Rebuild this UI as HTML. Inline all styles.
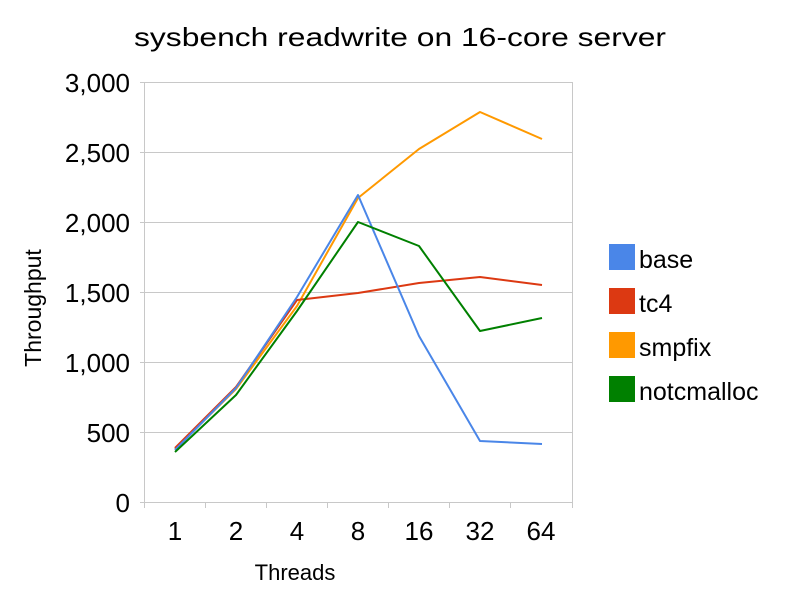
<!DOCTYPE html>
<html><head><meta charset="utf-8"><style>
html,body{margin:0;padding:0;background:#fff;}
svg{display:block;}
text{font-family:"Liberation Sans",sans-serif;fill:#000;}
</style></head><body>
<svg width="800" height="600" viewBox="0 0 800 600" xmlns="http://www.w3.org/2000/svg">
<rect width="800" height="600" fill="#fff"/>
<text x="400" y="46" font-size="26" text-anchor="middle" textLength="532" lengthAdjust="spacingAndGlyphs">sysbench readwrite on 16-core server</text>
<g stroke="#c8c8c8" stroke-width="1" fill="none">
<line x1="140" y1="82.5" x2="572" y2="82.5"/>
<line x1="140" y1="152.5" x2="572" y2="152.5"/>
<line x1="140" y1="222.5" x2="572" y2="222.5"/>
<line x1="140" y1="292.5" x2="572" y2="292.5"/>
<line x1="140" y1="362.5" x2="572" y2="362.5"/>
<line x1="140" y1="432.5" x2="572" y2="432.5"/>
<line x1="140" y1="502.5" x2="572" y2="502.5"/>
<line x1="144.5" y1="82" x2="144.5" y2="508"/>
<line x1="572.5" y1="82" x2="572.5" y2="508"/>
<line x1="205.5" y1="502" x2="205.5" y2="508"/>
<line x1="266.5" y1="502" x2="266.5" y2="508"/>
<line x1="327.5" y1="502" x2="327.5" y2="508"/>
<line x1="388.5" y1="502" x2="388.5" y2="508"/>
<line x1="449.5" y1="502" x2="449.5" y2="508"/>
<line x1="510.5" y1="502" x2="510.5" y2="508"/>
</g>
<g font-size="26" text-anchor="end">
<text x="130" y="92">3,000</text>
<text x="130" y="162">2,500</text>
<text x="130" y="232">2,000</text>
<text x="130" y="302">1,500</text>
<text x="130" y="372">1,000</text>
<text x="130" y="442">500</text>
<text x="130" y="512">0</text>
</g>
<g font-size="26" text-anchor="middle">
<text x="175" y="540">1</text>
<text x="236" y="540">2</text>
<text x="297" y="540">4</text>
<text x="358" y="540">8</text>
<text x="419" y="540">16</text>
<text x="480" y="540">32</text>
<text x="541" y="540">64</text>
</g>
<text x="295" y="580" font-size="22" text-anchor="middle">Threads</text>
<text x="0" y="0" font-size="23" text-anchor="middle" transform="translate(41,308) rotate(-90)">Throughput</text>
<g fill="none" stroke-width="2" stroke-linejoin="round">
<polyline stroke="#ff9900" points="175,449 236,389 297,306 358,198 419,149 480,112 542,139"/>
<polyline stroke="#dc3912" points="175,448 236,387 297,300 358,293 419,283 480,277 542,285"/>
<polyline stroke="#4a86e8" points="175,450 236,388 297,297 358,195 419,336 480,441 542,444"/>
<polyline stroke="#008000" points="175,452 236,395 297,311 358,222 419,246 480,331 542,318"/>
</g>
<rect x="609" y="244" width="26" height="26" fill="#4a86e8"/>
<rect x="609" y="288" width="26" height="26" fill="#dc3912"/>
<rect x="609" y="332" width="26" height="26" fill="#ff9900"/>
<rect x="609" y="376" width="26" height="26" fill="#008000"/>
<g font-size="25">
<text x="639" y="268">base</text>
<text x="639" y="312">tc4</text>
<text x="639" y="356">smpfix</text>
<text x="639" y="400">notcmalloc</text>
</g>
</svg>
</body></html>
